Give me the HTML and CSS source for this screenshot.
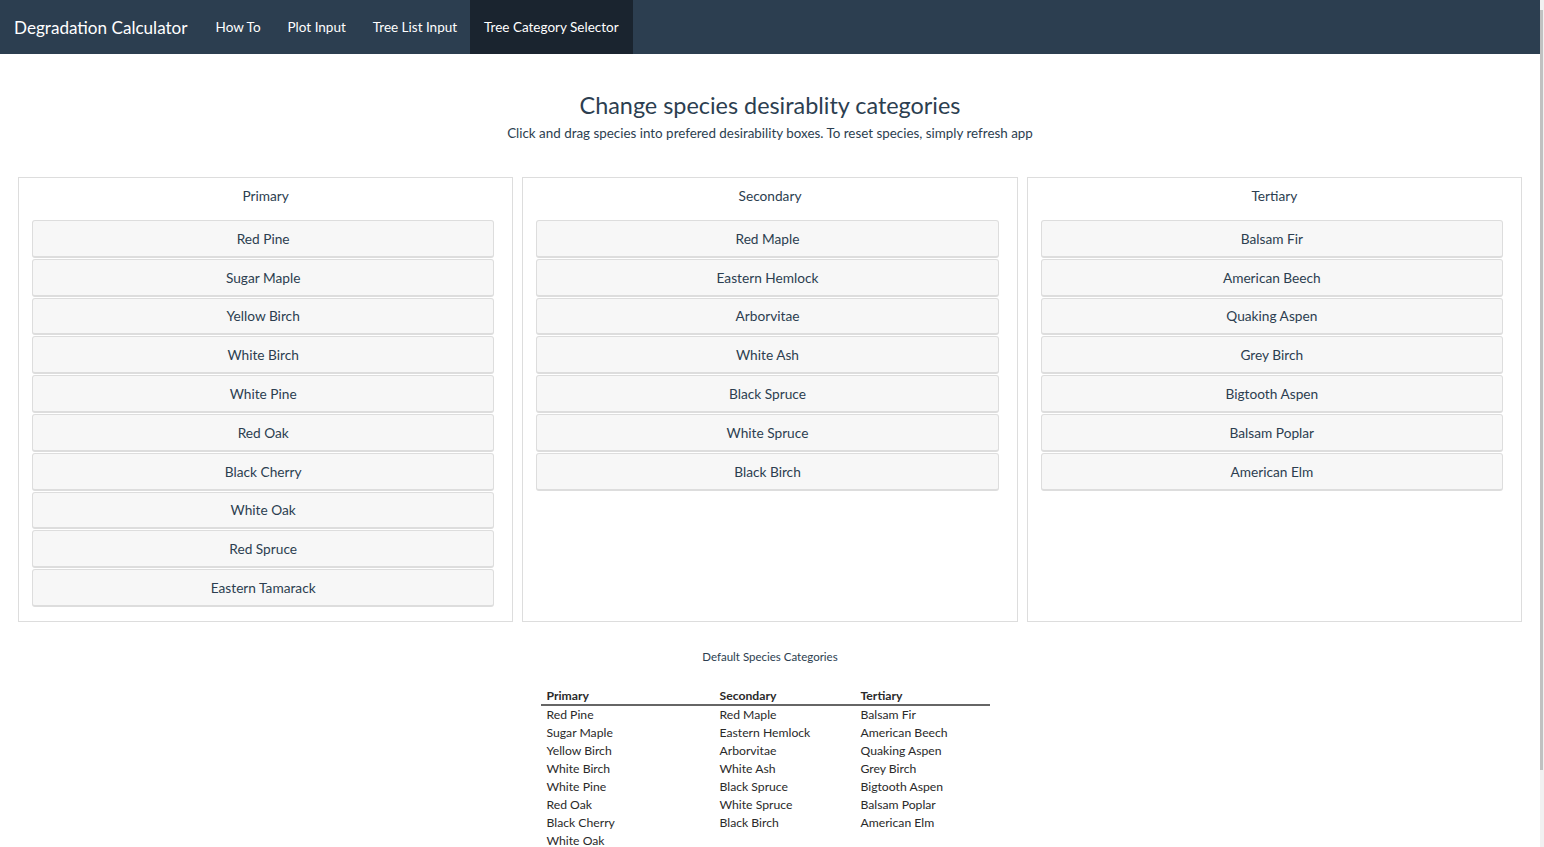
FILE: index.html
```html
<!DOCTYPE html>
<html>
<head>
<meta charset="utf-8">
<title>Degradation Calculator</title>
<link rel="stylesheet" href="styles.css">
</head>
<body>
<div class="page">
  <nav class="navbar">
    <div class="brand">Degradation Calculator</div>
    <ul class="nav">
      <li class="nav-item">How To</li>
      <li class="nav-item">Plot Input</li>
      <li class="nav-item">Tree List Input</li>
      <li class="nav-item active">Tree Category Selector</li>
    </ul>
  </nav>
  <main class="content">
    <header class="intro">
      <h1 class="title">Change species desirablity categories</h1>
      <p class="subtitle">Click and drag species into prefered desirability boxes. To reset species, simply refresh app</p>
    </header>
    <section class="buckets">
      <div class="bucket">
        <div class="bucket-title">Primary</div>
        <div class="rank-list">
          <div class="rank-item">Red Pine</div>
          <div class="rank-item">Sugar Maple</div>
          <div class="rank-item">Yellow Birch</div>
          <div class="rank-item">White Birch</div>
          <div class="rank-item">White Pine</div>
          <div class="rank-item">Red Oak</div>
          <div class="rank-item">Black Cherry</div>
          <div class="rank-item">White Oak</div>
          <div class="rank-item">Red Spruce</div>
          <div class="rank-item">Eastern Tamarack</div>
        </div>
      </div>
      <div class="bucket">
        <div class="bucket-title">Secondary</div>
        <div class="rank-list">
          <div class="rank-item">Red Maple</div>
          <div class="rank-item">Eastern Hemlock</div>
          <div class="rank-item">Arborvitae</div>
          <div class="rank-item">White Ash</div>
          <div class="rank-item">Black Spruce</div>
          <div class="rank-item">White Spruce</div>
          <div class="rank-item">Black Birch</div>
        </div>
      </div>
      <div class="bucket">
        <div class="bucket-title">Tertiary</div>
        <div class="rank-list">
          <div class="rank-item">Balsam Fir</div>
          <div class="rank-item">American Beech</div>
          <div class="rank-item">Quaking Aspen</div>
          <div class="rank-item">Grey Birch</div>
          <div class="rank-item">Bigtooth Aspen</div>
          <div class="rank-item">Balsam Poplar</div>
          <div class="rank-item">American Elm</div>
        </div>
      </div>
    </section>
    <section class="defaults">
      <h5 class="defaults-title">Default Species Categories</h5>
      <table class="default-table">
        <thead>
          <tr><th>Primary</th><th>Secondary</th><th>Tertiary</th></tr>
        </thead>
        <tbody>
          <tr><td>Red Pine</td><td>Red Maple</td><td>Balsam Fir</td></tr>
          <tr><td>Sugar Maple</td><td>Eastern Hemlock</td><td>American Beech</td></tr>
          <tr><td>Yellow Birch</td><td>Arborvitae</td><td>Quaking Aspen</td></tr>
          <tr><td>White Birch</td><td>White Ash</td><td>Grey Birch</td></tr>
          <tr><td>White Pine</td><td>Black Spruce</td><td>Bigtooth Aspen</td></tr>
          <tr><td>Red Oak</td><td>White Spruce</td><td>Balsam Poplar</td></tr>
          <tr><td>Black Cherry</td><td>Black Birch</td><td>American Elm</td></tr>
          <tr><td>White Oak</td><td></td><td></td></tr>
        </tbody>
      </table>
    </section>
  </main>
</div>
<div class="scrollbar"><div class="thumb"></div></div>
</body>
</html>
```
FILE: styles.css
```css
html, body {
  margin: 0;
  padding: 0;
  height: 847px;
  overflow: hidden;
}
body {
  display: flex;
  font-family: Lato, "Noto Sans", sans-serif;
  color: #2c3e50;
  background: #fff;
}
.page {
  flex: 1;
  min-width: 0;
}
.scrollbar {
  width: 4px;
  background: #f1f1f1;
  padding-top: 10px;
}
.thumb {
  width: 3px;
  height: 760px;
  background: #c1c1c1;
}
.navbar {
  display: flex;
  height: 54px;
  background: #2c3e50;
  color: #fff;
}
.brand {
  display: flex;
  align-items: center;
  padding: 0 14px 0 14px;
  font-size: 17.1px;
}
.nav {
  display: flex;
  list-style: none;
  margin: 0;
  padding: 0;
}
.nav-item {
  display: flex;
  align-items: center;
  padding: 0 13px 0 14px;
  font-size: 13.5px;
}
.nav-item.active {
  background: #1a242f;
  padding-right: 14px;
}
.intro {
  text-align: center;
  padding-top: 36px;
}
.title {
  margin: 0;
  font-size: 23.4px;
  font-weight: 400;
  line-height: 30px;
}
.subtitle {
  margin: 3px 0 0;
  font-size: 13.4px;
  line-height: 20px;
}
.buckets {
  display: grid;
  grid-template-columns: repeat(3, 1fr);
  gap: 9px;
  padding: 34px 18px 0;
}
.bucket {
  box-sizing: border-box;
  border: 1px solid #ddd;
  padding: 0 18px 14px 13px;
}
.bucket-title {
  text-align: center;
  font-size: 13.7px;
  line-height: 20px;
  padding: 8px 0 14px 5px;
}
.rank-list {
  display: flex;
  flex-direction: column;
  gap: 1px;
}
.rank-item {
  box-sizing: border-box;
  height: 37.8px;
  display: flex;
  align-items: center;
  justify-content: center;
  background: #f7f7f7;
  border: 1px solid #ddd;
  border-bottom-width: 2px;
  border-radius: 3px;
  font-size: 13.7px;
}
.defaults {
  text-align: center;
  padding-top: 27px;
}
.defaults-title {
  margin: 0;
  font-size: 11.5px;
  font-weight: 400;
  line-height: 16px;
}
.default-table {
  margin: 23px auto 0;
  border-collapse: collapse;
  text-align: left;
  font-family: Lato, "Open Sans", sans-serif;
  font-size: 12.2px;
  color: #2a2a2a;
  transform: translateX(-5px);
}
.default-table th {
  font-weight: 700;
  padding: 0 6px;
  line-height: 16px;
  border-bottom: 2px solid #666;
}
.default-table td {
  padding: 0 6px;
  line-height: 18px;
}
.default-table th:nth-child(1), .default-table td:nth-child(1) { width: 161px; }
.default-table th:nth-child(2), .default-table td:nth-child(2) { width: 129px; }
.default-table th:nth-child(3), .default-table td:nth-child(3) { width: 123px; }
```
